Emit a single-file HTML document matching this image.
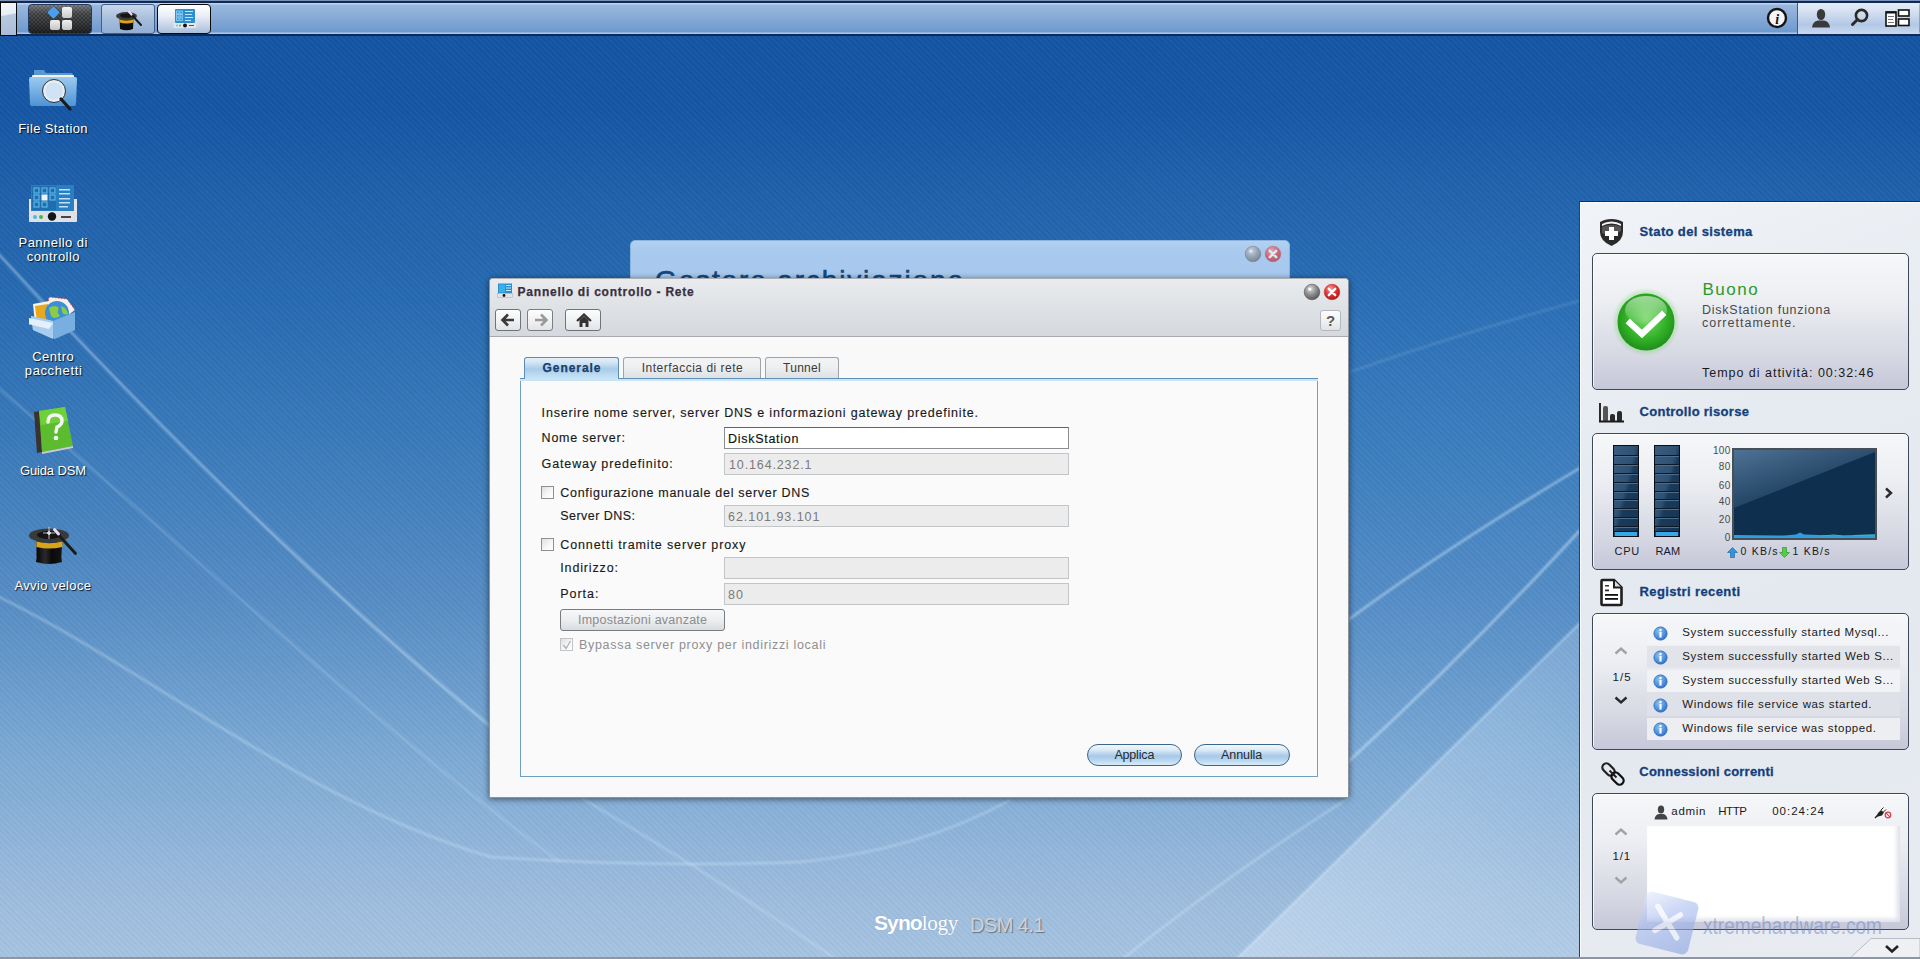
<!DOCTYPE html>
<html><head><meta charset="utf-8">
<style>
*{box-sizing:border-box;margin:0;padding:0}
html,body{width:1920px;height:959px;overflow:hidden}
body{position:relative;font-family:"Liberation Sans",sans-serif;font-size:13px;color:#222;
background:linear-gradient(180deg,#1454a3 0px,#1556a5 110px,#1f61ab 200px,#276bb2 300px,#3b7bbb 450px,#568dc5 600px,#7ba9d4 750px,#9ebdde 900px,#a6c4e2 959px);}
.abs{position:absolute}
.t{position:absolute;white-space:nowrap}
#glow{position:absolute;left:0;top:0;width:1920px;height:959px;background:radial-gradient(ellipse 650px 450px at 1450px 430px,rgba(70,150,225,0.13),rgba(70,150,225,0) 100%)}
#stripes{position:absolute;left:0;top:0;width:1920px;height:959px;
background:repeating-linear-gradient(45deg,rgba(255,255,255,0.022) 0 2px,rgba(0,0,0,0.022) 2px 4px);}
.dl{color:#fff;text-shadow:1px 1px 1px rgba(0,0,0,0.8)}
</style></head>
<body>

<div id="glow"></div><div id="stripes"></div>
<svg class="abs" style="left:0;top:0" width="1920" height="959">
<defs><filter id="bl1"><feGaussianBlur stdDeviation="1.3"/></filter><filter id="bl6"><feGaussianBlur stdDeviation="3"/></filter>
<linearGradient id="bandg" x1="0" y1="0" x2="1" y2="0.3"><stop offset="0" stop-color="#eaf4ff" stop-opacity="0.42"/><stop offset="1" stop-color="#eaf4ff" stop-opacity="0.18"/></linearGradient></defs>
<path d="M1230 965 L1585 618 L1585 965 Z" fill="url(#bandg)"/>
<g fill="none" stroke="#dcefff" filter="url(#bl1)">
 <path d="M-5 250 Q 250 530 495 730" stroke-width="2.2" stroke-opacity="0.5"/>
 <path d="M-5 385 C 200 560, 380 730, 560 862" stroke-width="1.6" stroke-opacity="0.3"/>
 <path d="M-5 595 C 150 670, 300 800, 491 857 Q 650 868 800 862 Q 920 850 1010 800" stroke-width="2" stroke-opacity="0.42"/>
 <path d="M580 797 Q 720 880 845 965" stroke-width="1.8" stroke-opacity="0.38"/>
 <path d="M1115 965 Q 1220 880 1350 797" stroke-width="2" stroke-opacity="0.4"/>
 <path d="M1348 620 Q 1450 545 1590 462" stroke-width="2.4" stroke-opacity="0.5"/>
 <path d="M1350 372 Q 1470 330 1590 298" stroke-width="1.5" stroke-opacity="0.2"/>
 <path d="M1348 762 Q 1470 650 1585 525" stroke-width="2.6" stroke-opacity="0.5"/>
 <path d="M1230 965 L1585 618" stroke-width="2" stroke-opacity="0.45"/>
</g>
</svg>
<div id="taskbar" class="abs" style="left:0;top:0;width:1920px;height:36px;background:#0f2b55;">
 <div class="abs" style="left:0;top:0;width:1920px;height:1px;background:#7a92b8"></div>
 <div class="abs" style="left:0;top:3px;width:1920px;height:31px;background:linear-gradient(180deg,#b9d4f2 0,#b9d4f2 1px,#9ab8dd 2px,#86a9d6 15px,#6e9ad0 29px,#a8c8ec 30px,#a8c8ec 31px)"></div>
 <div class="abs" style="left:0;top:2px;width:17px;height:34px;border:1px solid #0a0a0a;background:linear-gradient(170deg,#f4f6fa 0,#e8eef6 35%,#b8c9de 40%,#a9bcd6 100%)"></div>
 <div class="abs" style="left:28px;top:4px;width:64px;height:30px;border:1px solid #243a5a;border-radius:4px;background:repeating-conic-gradient(rgba(255,255,255,0.06) 0 25%,rgba(0,0,0,0.12) 0 50%) 0 0/4px 4px,linear-gradient(180deg,#77797d 0,#45474a 30%,#1a1b1d 100%)">
  <div class="abs" style="left:20px;top:3px;width:9px;height:9px;background:#4a9ff0;transform:rotate(45deg);border-radius:1px;box-shadow:0 0 1px #123"></div>
  <div class="abs" style="left:33px;top:2px;width:10px;height:11px;background:linear-gradient(#f4f4f4,#c9c9c9);border-radius:2px"></div>
  <div class="abs" style="left:21px;top:15px;width:10px;height:10px;background:linear-gradient(#f0f0f0,#c4c4c4);border-radius:2px"></div>
  <div class="abs" style="left:33px;top:15px;width:10px;height:10px;background:linear-gradient(#f0f0f0,#c4c4c4);border-radius:2px"></div>
 </div>
 <div class="abs" style="left:101px;top:4px;width:54px;height:30px;border:1px solid #3f5f8a;border-radius:3px;background:linear-gradient(180deg,#c9d7ea 0,#a7bedc 50%,#93afd6 100%)">
  <svg class="abs" style="left:13px;top:3px" width="30" height="24" viewBox="0 0 30 24">
   <ellipse cx="11.5" cy="8" rx="10.5" ry="4" fill="#3a3a3a"/>
   <ellipse cx="11.5" cy="7.6" rx="6.5" ry="2.2" fill="#151515"/>
   <path d="M4.5 11 Q11.5 13 18.5 11 L18 21 Q11.5 23.5 5 21 Z" fill="#0c0c0c"/>
   <path d="M4.5 11.5 Q11.5 13.5 18.5 11.5 L18.5 14.5 Q11.5 16.5 4.5 14.5 Z" fill="#d9a41a"/>
   <line x1="15" y1="5" x2="26" y2="17" stroke="#1a1a1a" stroke-width="2" stroke-linecap="round"/>
   <line x1="14" y1="3.5" x2="16.5" y2="6.5" stroke="#e8dcf6" stroke-width="2.2" stroke-linecap="round"/>
  </svg>
 </div>
 <div class="abs" style="left:157px;top:4px;width:54px;height:30px;border:1.5px solid #0b0b0b;border-radius:4px;background:linear-gradient(180deg,#ffffff 0,#e9eef6 40%,#a9bfdd 100%)">
  <svg class="abs" style="left:15px;top:3px" width="24" height="22" viewBox="0 0 24 22">
   <rect x="2" y="1" width="20" height="14" rx="1" fill="#2f8ed0"/>
   <g fill="none" stroke="#8fd3f7" stroke-width="0.8"><rect x="3.5" y="3" width="2.5" height="2.5"/><rect x="7" y="3" width="2.5" height="2.5"/><rect x="3.5" y="6.5" width="2.5" height="2.5"/><rect x="7" y="6.5" width="2.5" height="2.5"/><rect x="3.5" y="10" width="2.5" height="2.5"/><rect x="7" y="10" width="2.5" height="2.5"/></g>
   <rect x="12" y="3" width="8" height="1" fill="#bfe6fa"/><rect x="12" y="6" width="7" height="1" fill="#bfe6fa"/><rect x="12" y="9" width="8" height="1" fill="#bfe6fa"/><rect x="12" y="12" width="6" height="1" fill="#bfe6fa"/>
   <rect x="0.5" y="15" width="23" height="5" rx="1" fill="#e6e6e6"/>
   <circle cx="12" cy="17.5" r="2" fill="#111"/><circle cx="4" cy="17.5" r="1" fill="#5bc0e8"/><circle cx="7" cy="17.5" r="1" fill="#4cb84c"/><rect x="16" y="17" width="5" height="1" fill="#555"/>
  </svg>
 </div>
 <div class="abs" style="left:1797px;top:3px;width:122px;height:31px;border-left:1px solid #3b5d8c;background:linear-gradient(180deg,#e6edf7 0,#d3dff0 30%,#b3c8e6 70%,#c9d9ef 100%)"></div>
 <svg class="abs" style="left:1766px;top:7px" width="22" height="22" viewBox="0 0 22 22">
  <circle cx="11" cy="11" r="9" fill="#f4f6f8" stroke="#151515" stroke-width="2.4"/>
  <text x="11.3" y="16.5" text-anchor="middle" font-family="Liberation Serif" font-weight="bold" font-style="italic" font-size="14" fill="#111">i</text>
 </svg>
 <svg class="abs" style="left:1811px;top:8px" width="20" height="20" viewBox="0 0 20 20">
  <ellipse cx="10" cy="6.5" rx="4.2" ry="5.5" fill="#3a3a3a"/>
  <path d="M1 19.5 Q2 13 7 12.5 L13 12.5 Q18 13 19 19.5 Z" fill="#3a3a3a"/>
 </svg>
 <svg class="abs" style="left:1850px;top:8px" width="20" height="20" viewBox="0 0 20 20">
  <circle cx="11.5" cy="7.5" r="5.6" fill="none" stroke="#2a2a2a" stroke-width="2.6"/>
  <line x1="7.5" y1="11.5" x2="2.5" y2="16.5" stroke="#2a2a2a" stroke-width="3" stroke-linecap="round"/>
 </svg>
 <svg class="abs" style="left:1885px;top:9px" width="26" height="19" viewBox="0 0 26 19">
  <rect x="1" y="3" width="10" height="14" fill="#fff" stroke="#111" stroke-width="1.6"/>
  <rect x="1" y="2.5" width="10" height="2" fill="#111"/>
  <rect x="13.5" y="1" width="10.5" height="6" fill="#fff" stroke="#111" stroke-width="1.6"/>
  <rect x="13.5" y="10" width="10.5" height="6.5" fill="#fff" stroke="#111" stroke-width="1.6"/>
  <rect x="3" y="7" width="6" height="0.8" fill="#555"/><rect x="3" y="10" width="5" height="0.8" fill="#555"/><rect x="3" y="13" width="6" height="0.8" fill="#555"/>
 </svg>
</div>




<svg class="abs" style="left:28px;top:66px" width="52" height="48" viewBox="0 0 52 48">
 <defs><linearGradient id="fold" x1="0" y1="0" x2="0" y2="1"><stop offset="0" stop-color="#9ccaf0"/><stop offset="1" stop-color="#4f93d4"/></linearGradient></defs>
 <path d="M6 4 L16 4 L18 7 L43 7 Q45 7 45 9 L45 12 L6 12 Z" fill="#5d97cf"/>
 <rect x="4" y="9" width="42" height="6" rx="1" fill="#f2f2e8"/>
 <path d="M1 13 Q1 11 3 11 L47 11 Q49 11 49 13 L48 38 Q48 40 46 40 L4 40 Q2 40 2 38 Z" fill="url(#fold)"/>
 <circle cx="26" cy="25" r="10" fill="#cfe3f4" stroke="#e8eef4" stroke-width="2.5"/>
 <circle cx="26" cy="25" r="11.5" fill="none" stroke="#333" stroke-width="1"/>
 <line x1="33" y1="33" x2="42" y2="43" stroke="#1b1b1b" stroke-width="3.2" stroke-linecap="round"/>
</svg>

<svg class="abs" style="left:28px;top:184px" width="50" height="40" viewBox="0 0 50 40">
 <rect x="3" y="1" width="43" height="26" fill="#2a7fc2"/>
 <rect x="4" y="2" width="24" height="24" fill="#1f6fb0"/>
 <g fill="none" stroke="#5cb5e6" stroke-width="1.2">
  <rect x="6" y="4" width="5" height="5"/><rect x="14" y="4" width="5" height="5"/><rect x="22" y="4" width="5" height="5"/>
  <rect x="6" y="11" width="5" height="5"/><rect x="22" y="11" width="5" height="5"/>
  <rect x="6" y="18" width="5" height="5"/><rect x="14" y="18" width="5" height="5"/>
 </g>
 <rect x="13.5" y="10.5" width="6" height="6" fill="#e9f4ff"/>
 <g fill="#bfe2f8"><rect x="31" y="5" width="11" height="1.5"/><rect x="31" y="9" width="11" height="1.5"/><rect x="31" y="14" width="11" height="1.5"/><rect x="31" y="18" width="11" height="1.5"/><rect x="31" y="22" width="9" height="1.5"/></g>
 <path d="M1 15 L3 15 L3 27 L46 27 L46 15 L49 15 L49 37 Q49 38 47 38 L3 38 Q1 38 1 37 Z" fill="#e2e4e8"/>
 <rect x="1" y="27" width="48" height="11" rx="1.5" fill="#dfe1e6"/>
 <circle cx="7" cy="33" r="2" fill="#4fb6e8"/><circle cx="13" cy="33" r="2" fill="#49b548"/>
 <circle cx="24" cy="32.5" r="4.2" fill="#151515"/>
 <rect x="33" y="32" width="10" height="2" fill="#444"/>
</svg>

<svg class="abs" style="left:29px;top:294px" width="48" height="46" viewBox="0 0 48 46">
 <path d="M20 3 L38 5 L46 16 L36 24 L18 14 Z" fill="#f4f0ee" stroke="#d33" stroke-width="0.8" stroke-dasharray="1.5 1.5"/>
 <path d="M4 10 L20 7 L22 28 L6 30 Z" fill="#f6f3e8"/>
 <path d="M6 12 L19 10 L21 26 L8 28 Z" fill="#e8a81e"/>
 <circle cx="28" cy="19" r="12" fill="#3a8fd6"/>
 <path d="M20 14 Q26 10 30 14 Q27 18 31 22 Q25 26 22 22 Z" fill="#8ccc44"/>
 <path d="M32 12 Q38 14 39 20 Q34 22 33 17 Z" fill="#8ccc44"/>
 <path d="M2 22 L24 27 L46 18 L46 36 L26 45 L4 36 Z" fill="#78aee0"/>
 <path d="M2 22 L24 27 L24 45 L4 36 Z" fill="#a9cdf0"/>
 <path d="M0 24 L24 29 L20 35 L-1 30 Z" fill="#e4f0fb"/>
</svg>

<svg class="abs" style="left:32px;top:407px" width="44" height="48" viewBox="0 0 44 48">
 <path d="M2 5 L8 4 L10 45 L5 46 Z" fill="#3a3230"/>
 <path d="M7 4 L33 0 L41 39 L10 45 Z" fill="#5dbb2e"/>
 <path d="M7 4 L33 0 L36 14 L9 18 Z" fill="#6fd03a"/>
 <path d="M10 45 L41 39 L41 41 L10 47 Z" fill="#ccc"/>
 <path d="M16 15 Q16 8 23 8 Q30 8 30 14 Q30 18 25 20 L24 25" fill="none" stroke="#f4f4f4" stroke-width="3.5" stroke-linecap="round"/>
 <circle cx="24" cy="31" r="2.3" fill="#f4f4f4"/>
</svg>

<svg class="abs" style="left:28px;top:524px" width="50" height="44" viewBox="0 0 50 44">
 <defs><linearGradient id="hatc" x1="0" y1="0" x2="1" y2="0"><stop offset="0" stop-color="#050505"/><stop offset="0.35" stop-color="#2a2a2a"/><stop offset="0.6" stop-color="#0a0a0a"/><stop offset="1" stop-color="#151515"/></linearGradient></defs>
 <ellipse cx="21" cy="11.5" rx="20" ry="7" fill="#3a3a3a"/>
 <ellipse cx="21" cy="11" rx="12" ry="4" fill="#141414"/>
 <path d="M8.5 17 Q21 20 34.3 17 L33.5 30 Q33 34 34 38 Q21 42 8 38 Q9 34 8.5 30 Z" fill="url(#hatc)"/>
 <path d="M8.5 17.5 Q21 21 34.3 17.5 L34.3 23 Q21 26 8.5 23 Z" fill="#d9a41a"/>
 <line x1="28" y1="8" x2="47.5" y2="29.5" stroke="#1a1a1a" stroke-width="2.8" stroke-linecap="round"/>
 <line x1="26.5" y1="5.5" x2="30.5" y2="10" stroke="#e8dcf6" stroke-width="3" stroke-linecap="round"/>
 <path d="M19 9 L21 7 L23 9 L21 11 Z M21 3 L21 15 M15 9 L27 9" stroke="#fff" stroke-width="0.8" fill="#fff" opacity="0.85"/>
</svg>

<div class="t" style="left:18.3px;top:122.2px;font-size:13px;line-height:13px;font-weight:normal;color:#fff;letter-spacing:0.38px;text-shadow:1px 1px 1px rgba(0,0,0,0.85);">File Station</div>
<div class="t" style="left:18.5px;top:235.8px;font-size:13px;line-height:13px;font-weight:normal;color:#fff;letter-spacing:0.46px;text-shadow:1px 1px 1px rgba(0,0,0,0.85);">Pannello di</div>
<div class="t" style="left:26.7px;top:249.9px;font-size:13px;line-height:13px;font-weight:normal;color:#fff;letter-spacing:0.46px;text-shadow:1px 1px 1px rgba(0,0,0,0.85);">controllo</div>
<div class="t" style="left:32.2px;top:350.0px;font-size:13px;line-height:13px;font-weight:normal;color:#fff;letter-spacing:0.51px;text-shadow:1px 1px 1px rgba(0,0,0,0.85);">Centro</div>
<div class="t" style="left:24.8px;top:363.9px;font-size:13px;line-height:13px;font-weight:normal;color:#fff;letter-spacing:0.62px;text-shadow:1px 1px 1px rgba(0,0,0,0.85);">pacchetti</div>
<div class="t" style="left:20.0px;top:463.7px;font-size:13px;line-height:13px;font-weight:normal;color:#fff;letter-spacing:-0.15px;text-shadow:1px 1px 1px rgba(0,0,0,0.85);">Guida DSM</div>
<div class="t" style="left:14.5px;top:578.5px;font-size:13px;line-height:13px;font-weight:normal;color:#fff;letter-spacing:0.34px;text-shadow:1px 1px 1px rgba(0,0,0,0.85);">Avvio veloce</div>
<div class="t" style="left:874.0px;top:911.8px;font-size:21px;line-height:21px;font-weight:bold;color:#fff;letter-spacing:-0.9px;text-shadow:0 0 1px rgba(80,110,150,0.4);">Syno<span style="font-weight:normal;font-family:Liberation Serif;letter-spacing:-0.3px">logy</span></div>
<div class="t" style="left:970.0px;top:915.4px;font-size:20px;line-height:20px;font-weight:normal;color:#cfd3d8;letter-spacing:-0.55px;text-shadow:1px 1px 1px rgba(60,60,60,0.6);">DSM 4.1</div>
<div class="abs" style="left:630px;top:240px;width:660px;height:70px;border-radius:5px 5px 0 0;background:linear-gradient(180deg,#b3d1f1 0,#a9caee 10px,#a6c8ed 100%);border:1px solid #8db2de;overflow:hidden">
</div>
<div class="t" style="left:655.0px;top:266.7px;font-size:28px;line-height:28px;font-weight:normal;color:#12487f;letter-spacing:1.86px;-webkit-text-stroke:0.6px #12487f;">Gestore archiviazione</div>
<svg class="abs" style="left:1244px;top:245px;opacity:0.6;" width="40" height="18" viewBox="0 0 40 18">
 <defs>
  <radialGradient id="gg1253" cx="0.4" cy="0.3" r="0.8"><stop offset="0" stop-color="#d8d8d8"/><stop offset="0.5" stop-color="#8a8a8a"/><stop offset="1" stop-color="#4a4a4a"/></radialGradient>
  <radialGradient id="rg1253" cx="0.4" cy="0.3" r="0.8"><stop offset="0" stop-color="#ff9a9a"/><stop offset="0.5" stop-color="#e03030"/><stop offset="1" stop-color="#a01010"/></radialGradient>
 </defs>
 <circle cx="9" cy="9" r="7.8" fill="url(#gg1253)" stroke="#555" stroke-width="0.6"/>
 <circle cx="6.8" cy="6.2" r="1.6" fill="#fff" fill-opacity="0.9"/>
 <circle cx="29" cy="9" r="7.8" fill="url(#rg1253)" stroke="#c03030" stroke-width="0.6"/>
 <path d="M25.8 5.8 L32.2 12.2 M32.2 5.8 L25.8 12.2" stroke="#fff" stroke-width="2.4" stroke-linecap="round"/>
</svg>
<div class="abs" style="left:489px;top:278px;width:860px;height:520px;border-radius:4px 4px 0 0;background:#f9f9f9;box-shadow:0 1px 6px rgba(0,0,0,0.55);border:1px solid #8e949a;border-top-color:#aab0b6;overflow:hidden">
 <div class="abs" style="left:0;top:0;width:858px;height:58px;background:linear-gradient(180deg,#e9ebee 0,#e2e5e8 20px,#d5d8dc 57px);border-bottom:1px solid #a6aaaf"></div>
</div>
<svg class="abs" style="left:497px;top:283px" width="16" height="15" viewBox="0 0 16 15">
 <rect x="1" y="0.5" width="14" height="10" fill="#2a8fd0"/><rect x="2" y="1.5" width="6" height="8" fill="#39b0e8"/>
 <rect x="9" y="2" width="5" height="1" fill="#bfe6fa"/><rect x="9" y="4.5" width="5" height="1" fill="#bfe6fa"/><rect x="9" y="7" width="5" height="1" fill="#bfe6fa"/>
 <rect x="0.5" y="10.5" width="15" height="4" fill="#e4e4e4" stroke="#aaa" stroke-width="0.5"/><circle cx="7" cy="12.5" r="1.4" fill="#111"/>
</svg>
<div class="t" style="left:517.6px;top:285.7px;font-size:12px;line-height:12px;font-weight:bold;color:#3a3040;letter-spacing:0.77px;-webkit-text-stroke:0.25px #3a3040;">Pannello di controllo - Rete</div>
<svg class="abs" style="left:1303px;top:283px;" width="40" height="18" viewBox="0 0 40 18">
 <defs>
  <radialGradient id="gg1312" cx="0.4" cy="0.3" r="0.8"><stop offset="0" stop-color="#d8d8d8"/><stop offset="0.5" stop-color="#8a8a8a"/><stop offset="1" stop-color="#4a4a4a"/></radialGradient>
  <radialGradient id="rg1312" cx="0.4" cy="0.3" r="0.8"><stop offset="0" stop-color="#ff9a9a"/><stop offset="0.5" stop-color="#e03030"/><stop offset="1" stop-color="#a01010"/></radialGradient>
 </defs>
 <circle cx="9" cy="9" r="7.8" fill="url(#gg1312)" stroke="#555" stroke-width="0.6"/>
 <circle cx="6.8" cy="6.2" r="1.6" fill="#fff" fill-opacity="0.9"/>
 <circle cx="29" cy="9" r="7.8" fill="url(#rg1312)" stroke="#c03030" stroke-width="0.6"/>
 <path d="M25.8 5.8 L32.2 12.2 M32.2 5.8 L25.8 12.2" stroke="#fff" stroke-width="2.4" stroke-linecap="round"/>
</svg>
<div class="abs" style="left:495px;top:309px;width:26px;height:22px;border:1px solid #6f7479;border-radius:3px;background:linear-gradient(180deg,#fdfdfd 0,#f1f2f3 50%,#e1e3e6 100%)"><svg class="abs" style="left:4px;top:3px" width="16" height="14" viewBox="0 0 16 14"><path d="M8 1.5 L2.5 7 L8 12.5 M3 7 L14 7" fill="none" stroke="#3a3a3a" stroke-width="2.6" stroke-linejoin="miter"/></svg></div>
<div class="abs" style="left:527px;top:309px;width:26px;height:22px;border:1px solid #7a7e83;border-radius:3px;background:linear-gradient(180deg,#fdfdfd 0,#f1f2f3 50%,#e1e3e6 100%)"><svg class="abs" style="left:5px;top:3px" width="16" height="14" viewBox="0 0 16 14"><path d="M8 1.5 L13.5 7 L8 12.5 M13 7 L2 7" fill="none" stroke="#9a9a9a" stroke-width="2.6"/></svg></div>
<div class="abs" style="left:565px;top:309px;width:36px;height:22px;border:1px solid #6f7479;border-radius:3px;background:linear-gradient(180deg,#fdfdfd 0,#f1f2f3 50%,#e1e3e6 100%)"><svg class="abs" style="left:10px;top:3px" width="16" height="15" viewBox="0 0 16 15"><path d="M1 8 L8 1.5 L15 8" fill="none" stroke="#333" stroke-width="2.2"/><path d="M3.5 7 L8 3 L12.5 7 L12.5 14 L9.5 14 L9.5 10 L6.5 10 L6.5 14 L3.5 14 Z" fill="#333"/></svg></div>
<div class="abs" style="left:1320px;top:310px;width:21px;height:21px;border:1px solid #b4b8bc;border-radius:3px;background:linear-gradient(180deg,#fdfdfd 0,#f1f2f3 50%,#e1e3e6 100%)"><div class="t" style="left:5px;top:1px;font-size:15px;line-height:18px;font-weight:bold;color:#5a5a5a">?</div></div>
<div class="abs" style="left:524px;top:357px;width:95px;height:23px;border:1px solid #5b8cb4;border-bottom:none;border-radius:3px 3px 0 0;background:linear-gradient(180deg,#e6f1fa 0,#cfe3f4 5px,#a9cbe8 11px,#bcdcf2 17px,#cde8f8 22px)"></div>
<div class="abs" style="left:623px;top:357px;width:138px;height:22px;border:1px solid #9ea4aa;border-bottom:none;border-radius:3px 3px 0 0;background:linear-gradient(180deg,#f1f3f5 0,#eef0f2 40%,#dde0e4 100%)"></div>
<div class="abs" style="left:765px;top:357px;width:74px;height:22px;border:1px solid #9ea4aa;border-bottom:none;border-radius:3px 3px 0 0;background:linear-gradient(180deg,#f1f3f5 0,#eef0f2 40%,#dde0e4 100%)"></div>
<div class="abs" style="left:520px;top:378px;width:798px;height:4px;background:#c9e4f5;border-top:1px solid #5f90b8;border-bottom:1px solid #5f90b8"></div>
<div class="abs" style="left:525px;top:378px;width:93px;height:2px;background:#c9e4f5"></div>
<div class="abs" style="left:520px;top:381px;width:798px;height:396px;border:1px solid #6fa0c2;border-top:none;background:#fafafa"></div>
<div class="t" style="left:542.5px;top:362.0px;font-size:12px;line-height:12px;font-weight:bold;color:#1b3d6b;letter-spacing:0.95px;-webkit-text-stroke:0.25px #1b3d6b;">Generale</div>
<div class="t" style="left:641.7px;top:362.0px;font-size:12px;line-height:12px;font-weight:normal;color:#3a3a3a;letter-spacing:0.50px;">Interfaccia di rete</div>
<div class="t" style="left:783.1px;top:362.0px;font-size:12px;line-height:12px;font-weight:normal;color:#3a3a3a;letter-spacing:0.25px;">Tunnel</div>
<div class="t" style="left:541.6px;top:406.8px;font-size:12.5px;line-height:12.5px;font-weight:normal;color:#1a1a1a;letter-spacing:0.81px;-webkit-text-stroke:0.15px #1a1a1a;">Inserire nome server, server DNS e informazioni gateway predefinite.</div>
<div class="t" style="left:541.6px;top:431.8px;font-size:12.5px;line-height:12.5px;font-weight:normal;color:#1a1a1a;letter-spacing:0.76px;-webkit-text-stroke:0.15px #1a1a1a;">Nome server:</div>
<div class="t" style="left:541.6px;top:457.6px;font-size:12.5px;line-height:12.5px;font-weight:normal;color:#1a1a1a;letter-spacing:0.87px;-webkit-text-stroke:0.15px #1a1a1a;">Gateway predefinito:</div>
<div class="t" style="left:560.3px;top:487.1px;font-size:12.5px;line-height:12.5px;font-weight:normal;color:#1a1a1a;letter-spacing:0.70px;-webkit-text-stroke:0.15px #1a1a1a;">Configurazione manuale del server DNS</div>
<div class="t" style="left:560.3px;top:509.9px;font-size:12.5px;line-height:12.5px;font-weight:normal;color:#1a1a1a;letter-spacing:0.45px;-webkit-text-stroke:0.15px #1a1a1a;">Server DNS:</div>
<div class="t" style="left:560.3px;top:539.0px;font-size:12.5px;line-height:12.5px;font-weight:normal;color:#1a1a1a;letter-spacing:0.88px;-webkit-text-stroke:0.15px #1a1a1a;">Connetti tramite server proxy</div>
<div class="t" style="left:560.3px;top:562.1px;font-size:12.5px;line-height:12.5px;font-weight:normal;color:#1a1a1a;letter-spacing:0.85px;-webkit-text-stroke:0.15px #1a1a1a;">Indirizzo:</div>
<div class="t" style="left:560.3px;top:588.0px;font-size:12.5px;line-height:12.5px;font-weight:normal;color:#1a1a1a;letter-spacing:0.95px;-webkit-text-stroke:0.15px #1a1a1a;">Porta:</div>
<div class="abs" style="left:724px;top:427px;width:345px;height:22px;background:#fff;border:1px solid #8a8e93;border-top-color:#5f6368"></div>
<div class="abs" style="left:724px;top:453px;width:345px;height:22px;background:#ececec;border:1px solid #c3c6c9"></div>
<div class="abs" style="left:724px;top:505px;width:345px;height:22px;background:#ececec;border:1px solid #c3c6c9"></div>
<div class="abs" style="left:724px;top:557px;width:345px;height:22px;background:#ececec;border:1px solid #c3c6c9"></div>
<div class="abs" style="left:724px;top:583px;width:345px;height:22px;background:#ececec;border:1px solid #c3c6c9"></div>
<div class="t" style="left:728.0px;top:432.6px;font-size:12.5px;line-height:12.5px;font-weight:normal;color:#111;letter-spacing:0.72px;-webkit-text-stroke:0.15px #111;">DiskStation</div>
<div class="t" style="left:729.0px;top:459.0px;font-size:12.5px;line-height:12.5px;font-weight:normal;color:#7a7a7a;letter-spacing:0.87px;">10.164.232.1</div>
<div class="t" style="left:728.0px;top:510.9px;font-size:12.5px;line-height:12.5px;font-weight:normal;color:#7a7a7a;letter-spacing:0.96px;">62.101.93.101</div>
<div class="t" style="left:728.0px;top:589.0px;font-size:12.5px;line-height:12.5px;font-weight:normal;color:#7a7a7a;letter-spacing:1.09px;">80</div>
<div class="abs" style="left:541px;top:486px;width:13px;height:13px;border:1px solid #8d9196;background:linear-gradient(135deg,#dcdfe2 0,#f8f8f8 60%,#fff 100%)"></div>
<div class="abs" style="left:541px;top:538px;width:13px;height:13px;border:1px solid #8d9196;background:linear-gradient(135deg,#dcdfe2 0,#f8f8f8 60%,#fff 100%)"></div>
<div class="abs" style="left:560px;top:638px;width:13px;height:13px;border:1px solid #c2c5c8;background:linear-gradient(135deg,#dcdfe2 0,#f8f8f8 60%,#fff 100%)"></div>
<svg class="abs" style="left:561px;top:639px" width="12" height="12" viewBox="0 0 12 12"><path d="M2.5 6 L5 9.5 L9.5 2" fill="none" stroke="#b0b0b0" stroke-width="1.3"/></svg>
<div class="abs" style="left:560px;top:609px;width:165px;height:22px;border:1px solid #777c81;border-radius:3px;background:linear-gradient(180deg,#f7f8f9 0,#eceef0 50%,#d9dcdf 100%)"></div>
<div class="t" style="left:578.0px;top:614.0px;font-size:12.5px;line-height:12.5px;font-weight:normal;color:#8c8c8c;letter-spacing:0.23px;">Impostazioni avanzate</div>
<div class="t" style="left:579.0px;top:638.6px;font-size:12.5px;line-height:12.5px;font-weight:normal;color:#8f8f8f;letter-spacing:0.69px;">Bypassa server proxy per indirizzi locali</div>
<div class="abs" style="left:1087px;top:744px;width:95px;height:22px;border:1px solid #3d6688;border-radius:11px;background:linear-gradient(180deg,#f2f8fd 0,#dcebf7 25%,#a7c8e7 55%,#bcd9f1 80%,#d9edfb 100%)"></div>
<div class="abs" style="left:1194px;top:744px;width:96px;height:22px;border:1px solid #3d6688;border-radius:11px;background:linear-gradient(180deg,#f2f8fd 0,#dcebf7 25%,#a7c8e7 55%,#bcd9f1 80%,#d9edfb 100%)"></div>
<div class="t" style="left:1114.4px;top:748.5px;font-size:12.5px;line-height:12.5px;font-weight:normal;color:#222a33;letter-spacing:-0.17px;">Applica</div>
<div class="t" style="left:1221.0px;top:748.5px;font-size:12.5px;line-height:12.5px;font-weight:normal;color:#222a33;letter-spacing:-0.07px;">Annulla</div>
<div class="abs" style="left:1579px;top:201px;width:341px;height:758px;background:linear-gradient(160deg,#f0f3f7 0,#e6ebf1 30%,#e4e9ef 60%,#e8ecf2 100%);border-left:1px solid #1f4272;border-top:1px solid #0f2e58;box-shadow:inset 1px 1px 0 #fafcff"></div>
<svg class="abs" style="left:1598px;top:218px" width="27" height="29" viewBox="0 0 27 29">
 <path d="M13.5 1 Q20 1 25 4 L25 14 Q25 23 13.5 28 Q2 23 2 14 L2 4 Q7 1 13.5 1 Z" fill="#2a2a2a"/>
 <path d="M13.5 3.5 Q19 3.5 23 6 L23 8 Q19 5.5 13.5 5.5 Q8 5.5 4 8 L4 6 Q8 3.5 13.5 3.5Z" fill="#f4f4f4"/>
 <path d="M4 9 Q8 7 13.5 7 Q19 7 23 9 L23 13 Q13 20 4 15 Z" fill="#6a6a6a" fill-opacity="0.7"/>
 <rect x="11" y="9" width="5" height="13" fill="#fff"/><rect x="7" y="13" width="13" height="5" fill="#fff"/>
</svg>
<div class="t" style="left:1639.6px;top:225.2px;font-size:13px;line-height:13px;font-weight:bold;color:#143f7c;letter-spacing:0.36px;-webkit-text-stroke:0.3px #143f7c;">Stato del sistema</div>
<div class="abs" style="left:1592px;top:253px;width:317px;height:137px;border:1px solid #3e4859;border-radius:5px;background:linear-gradient(180deg,#f6f7f9 0,#eceef2 35%,#d6d8e3 75%,#c6c8d9 100%);box-shadow:inset 1px 1px 0 rgba(255,255,255,0.8)"></div>
<svg class="abs" style="left:1612px;top:288px" width="68" height="68" viewBox="0 0 68 68">
 <defs>
  <radialGradient id="gc" cx="0.5" cy="0.45" r="0.55"><stop offset="0" stop-color="#7ad86a"/><stop offset="0.6" stop-color="#35b52a"/><stop offset="1" stop-color="#1f8f1a"/></radialGradient>
  <radialGradient id="gglow" cx="0.5" cy="0.5" r="0.5"><stop offset="0.75" stop-color="#6fd45f" stop-opacity="0.55"/><stop offset="1" stop-color="#6fd45f" stop-opacity="0"/></radialGradient>
  <linearGradient id="gshine" x1="0" y1="0" x2="0" y2="1"><stop offset="0" stop-color="#fff" stop-opacity="0.55"/><stop offset="1" stop-color="#fff" stop-opacity="0.05"/></linearGradient>
 </defs>
 <circle cx="34" cy="34" r="34" fill="url(#gglow)"/>
 <circle cx="34" cy="34" r="28.5" fill="url(#gc)"/>
 <ellipse cx="34" cy="22" rx="21" ry="14" fill="url(#gshine)"/>
 <path d="M18 35 L30 46 L50 27" fill="none" stroke="#fff" stroke-width="6.2" stroke-linecap="square"/>
</svg>
<div class="t" style="left:1702.4px;top:280.7px;font-size:17px;line-height:17px;font-weight:normal;color:#2c9a2c;letter-spacing:1.51px;">Buono</div>
<div class="t" style="left:1702.0px;top:303.6px;font-size:12.5px;line-height:12.5px;font-weight:normal;color:#4a4a4a;letter-spacing:0.75px;">DiskStation funziona</div>
<div class="t" style="left:1702.0px;top:317.0px;font-size:12.5px;line-height:12.5px;font-weight:normal;color:#4a4a4a;letter-spacing:1.00px;">correttamente.</div>
<div class="t" style="left:1702.0px;top:366.6px;font-size:12.5px;line-height:12.5px;font-weight:normal;color:#1a1a1a;letter-spacing:0.98px;">Tempo di attività: 00:32:46</div>
<svg class="abs" style="left:1598px;top:402px" width="27" height="21" viewBox="0 0 27 21">
 <rect x="1" y="1" width="2" height="19" fill="#2a2a2a"/>
 <rect x="5" y="4" width="5" height="16" rx="2" fill="#555"/>
 <rect x="12" y="12" width="5" height="8" rx="2" fill="#2a2a2a"/>
 <rect x="19" y="9" width="5" height="11" rx="2" fill="#2a2a2a"/>
 <rect x="1" y="18.5" width="25" height="2" fill="#1a1a1a"/>
</svg>
<div class="t" style="left:1639.5px;top:405.2px;font-size:13px;line-height:13px;font-weight:bold;color:#143f7c;letter-spacing:0.29px;-webkit-text-stroke:0.3px #143f7c;">Controllo risorse</div>
<div class="abs" style="left:1592px;top:433px;width:317px;height:137px;border:1px solid #3e4859;border-radius:5px;background:linear-gradient(180deg,#f6f7f9 0,#eceef2 35%,#d6d8e3 75%,#c6c8d9 100%);box-shadow:inset 1px 1px 0 rgba(255,255,255,0.8)"></div>
<div class="abs" style="left:1613px;top:445px;width:26px;height:92px;border:1px solid #0a0f16;background:linear-gradient(105deg,#3a5c7d 0,#2f5274 45%,#1b3a5a 55%,#163452 100%);overflow:hidden"><div class="abs" style="left:1px;top:9.9px;width:23px;height:1px;background:#4c6d8c"></div><div class="abs" style="left:0;top:8.9px;width:25px;height:1px;background:#0b1a2a"></div><div class="abs" style="left:1px;top:18.8px;width:23px;height:1px;background:#4c6d8c"></div><div class="abs" style="left:0;top:17.8px;width:25px;height:1px;background:#0b1a2a"></div><div class="abs" style="left:1px;top:27.7px;width:23px;height:1px;background:#4c6d8c"></div><div class="abs" style="left:0;top:26.7px;width:25px;height:1px;background:#0b1a2a"></div><div class="abs" style="left:1px;top:36.6px;width:23px;height:1px;background:#4c6d8c"></div><div class="abs" style="left:0;top:35.6px;width:25px;height:1px;background:#0b1a2a"></div><div class="abs" style="left:1px;top:45.5px;width:23px;height:1px;background:#4c6d8c"></div><div class="abs" style="left:0;top:44.5px;width:25px;height:1px;background:#0b1a2a"></div><div class="abs" style="left:1px;top:54.4px;width:23px;height:1px;background:#4c6d8c"></div><div class="abs" style="left:0;top:53.4px;width:25px;height:1px;background:#0b1a2a"></div><div class="abs" style="left:1px;top:63.3px;width:23px;height:1px;background:#4c6d8c"></div><div class="abs" style="left:0;top:62.3px;width:25px;height:1px;background:#0b1a2a"></div><div class="abs" style="left:1px;top:72.2px;width:23px;height:1px;background:#4c6d8c"></div><div class="abs" style="left:0;top:71.2px;width:25px;height:1px;background:#0b1a2a"></div><div class="abs" style="left:1px;top:81.1px;width:23px;height:1px;background:#4c6d8c"></div><div class="abs" style="left:0;top:80.1px;width:25px;height:1px;background:#0b1a2a"></div>
 <div class="abs" style="left:1px;top:86px;width:22px;height:4px;background:#3aa6ea"></div>
 <div class="abs" style="left:0;top:84.5px;width:25px;height:1px;background:#0b1a2a"></div></div>
<div class="abs" style="left:1654px;top:445px;width:26px;height:92px;border:1px solid #0a0f16;background:linear-gradient(105deg,#3a5c7d 0,#2f5274 45%,#1b3a5a 55%,#163452 100%);overflow:hidden"><div class="abs" style="left:1px;top:9.9px;width:23px;height:1px;background:#4c6d8c"></div><div class="abs" style="left:0;top:8.9px;width:25px;height:1px;background:#0b1a2a"></div><div class="abs" style="left:1px;top:18.8px;width:23px;height:1px;background:#4c6d8c"></div><div class="abs" style="left:0;top:17.8px;width:25px;height:1px;background:#0b1a2a"></div><div class="abs" style="left:1px;top:27.7px;width:23px;height:1px;background:#4c6d8c"></div><div class="abs" style="left:0;top:26.7px;width:25px;height:1px;background:#0b1a2a"></div><div class="abs" style="left:1px;top:36.6px;width:23px;height:1px;background:#4c6d8c"></div><div class="abs" style="left:0;top:35.6px;width:25px;height:1px;background:#0b1a2a"></div><div class="abs" style="left:1px;top:45.5px;width:23px;height:1px;background:#4c6d8c"></div><div class="abs" style="left:0;top:44.5px;width:25px;height:1px;background:#0b1a2a"></div><div class="abs" style="left:1px;top:54.4px;width:23px;height:1px;background:#4c6d8c"></div><div class="abs" style="left:0;top:53.4px;width:25px;height:1px;background:#0b1a2a"></div><div class="abs" style="left:1px;top:63.3px;width:23px;height:1px;background:#4c6d8c"></div><div class="abs" style="left:0;top:62.3px;width:25px;height:1px;background:#0b1a2a"></div><div class="abs" style="left:1px;top:72.2px;width:23px;height:1px;background:#4c6d8c"></div><div class="abs" style="left:0;top:71.2px;width:25px;height:1px;background:#0b1a2a"></div><div class="abs" style="left:1px;top:81.1px;width:23px;height:1px;background:#4c6d8c"></div><div class="abs" style="left:0;top:80.1px;width:25px;height:1px;background:#0b1a2a"></div>
 <div class="abs" style="left:1px;top:86px;width:22px;height:4px;background:#3aa6ea"></div>
 <div class="abs" style="left:0;top:84.5px;width:25px;height:1px;background:#0b1a2a"></div></div>
<div class="t" style="left:1614.5px;top:546.3px;font-size:11px;line-height:11px;font-weight:normal;color:#1a1a2a;letter-spacing:0.79px;">CPU</div>
<div class="t" style="left:1655.5px;top:546.3px;font-size:11px;line-height:11px;font-weight:normal;color:#1a1a2a;letter-spacing:0.08px;">RAM</div>
<div class="abs" style="left:1732px;top:448px;width:145px;height:92px;border:2px solid #4a4f55;background:#0f2f4f;overflow:hidden">
 <svg class="abs" style="left:0;top:0" width="141" height="88" viewBox="0 0 141 88">
  <defs><linearGradient id="chg" x1="0" y1="0" x2="0.7" y2="0.9"><stop offset="0" stop-color="#4f7395"/><stop offset="0.6" stop-color="#294b6c"/><stop offset="1" stop-color="#163656"/></linearGradient></defs>
  <path d="M0 0 L141 0 L141 2 L0 58 Z" fill="url(#chg)"/>
  <path d="M0 85 L50 85.5 L62 84.5 L66 82.5 L70 84.5 L100 85.5 L141 84.5 L141 88 L0 88 Z" fill="#2f9ee0"/>
  <path d="M88 86 L100 85 L108 86 M120 85.5 L141 85" fill="none" stroke="#3cc090" stroke-width="1.2"/>
 </svg>
</div>
<div class="t" style="left:1690px;width:40.5px;text-align:right;top:445.5px;font-size:10px;line-height:10px;color:#4a4a4a;letter-spacing:0.3px">100</div>
<div class="t" style="left:1690px;width:40.5px;text-align:right;top:462.3px;font-size:10px;line-height:10px;color:#4a4a4a;letter-spacing:0.3px">80</div>
<div class="t" style="left:1690px;width:40.5px;text-align:right;top:480.5px;font-size:10px;line-height:10px;color:#4a4a4a;letter-spacing:0.3px">60</div>
<div class="t" style="left:1690px;width:40.5px;text-align:right;top:497.3px;font-size:10px;line-height:10px;color:#4a4a4a;letter-spacing:0.3px">40</div>
<div class="t" style="left:1690px;width:40.5px;text-align:right;top:515.2px;font-size:10px;line-height:10px;color:#4a4a4a;letter-spacing:0.3px">20</div>
<div class="t" style="left:1690px;width:40.5px;text-align:right;top:533.0px;font-size:10px;line-height:10px;color:#4a4a4a;letter-spacing:0.3px">0</div>
<svg class="abs" style="left:1884px;top:487px" width="10" height="12" viewBox="0 0 10 12"><path d="M2 1.5 L7 6 L2 10.5" fill="none" stroke="#2a2a2a" stroke-width="2.4"/></svg>
<svg class="abs" style="left:1727px;top:547px" width="11" height="11" viewBox="0 0 11 11"><path d="M5.5 0.5 L10.5 5.5 L7.5 5.5 L7.5 10.5 L3.5 10.5 L3.5 5.5 L0.5 5.5 Z" fill="#2f95e0" stroke="#1a5fa0" stroke-width="0.6"/></svg>
<svg class="abs" style="left:1779px;top:547px" width="11" height="11" viewBox="0 0 11 11"><path d="M5.5 10.5 L10.5 5.5 L7.5 5.5 L7.5 0.5 L3.5 0.5 L3.5 5.5 L0.5 5.5 Z" fill="#4fd23f" stroke="#2a8a2a" stroke-width="0.6"/></svg>
<div class="t" style="left:1740.6px;top:545.7px;font-size:10.5px;line-height:10.5px;font-weight:normal;color:#1a1a1a;letter-spacing:1.21px;">0 KB/s</div>
<div class="t" style="left:1792.5px;top:545.7px;font-size:10.5px;line-height:10.5px;font-weight:normal;color:#1a1a1a;letter-spacing:1.21px;">1 KB/s</div>
<svg class="abs" style="left:1599px;top:578px" width="25" height="29" viewBox="0 0 25 29">
 <path d="M2.5 3 Q2.5 2 3.5 2 L15 2 L22.5 9.5 L22.5 26 Q22.5 27 21.5 27 L3.5 27 Q2.5 27 2.5 26 Z" fill="#fff" stroke="#1f1f1f" stroke-width="2.6"/>
 <path d="M15 2 L15 9.5 L22.5 9.5" fill="#ddd" stroke="#1f1f1f" stroke-width="2"/>
 <rect x="6" y="7" width="4" height="1.5" fill="#333"/><rect x="6" y="11.5" width="4" height="1.8" fill="#333"/>
 <rect x="6" y="16" width="13" height="1.8" fill="#111"/><rect x="6" y="20" width="13" height="1.8" fill="#111"/>
</svg>
<div class="t" style="left:1639.5px;top:585.2px;font-size:13px;line-height:13px;font-weight:bold;color:#143f7c;letter-spacing:0.39px;-webkit-text-stroke:0.3px #143f7c;">Registri recenti</div>
<div class="abs" style="left:1592px;top:613px;width:317px;height:137px;border:1px solid #3e4859;border-radius:5px;background:linear-gradient(180deg,#f6f7f9 0,#eceef2 35%,#d6d8e3 75%,#c6c8d9 100%);box-shadow:inset 1px 1px 0 rgba(255,255,255,0.8)"></div>
<div class="abs" style="left:1647px;top:622px;width:253px;height:22px;background:#f3f4f7"></div>
<svg class="abs" style="left:1653px;top:626px" width="15" height="15" viewBox="0 0 15 15"><defs><radialGradient id="ig0" cx="0.4" cy="0.35" r="0.7"><stop offset="0" stop-color="#8cc4f4"/><stop offset="1" stop-color="#2a6fc8"/></radialGradient></defs><circle cx="7.5" cy="7.5" r="6.7" fill="url(#ig0)" stroke="#2b66b4" stroke-width="0.6"/><rect x="6.4" y="6" width="2.2" height="5.5" fill="#fff"/><circle cx="7.5" cy="4" r="1.2" fill="#fff"/></svg>
<div class="t" style="left:1682.3px;top:627.4px;font-size:11.5px;line-height:11.5px;font-weight:normal;color:#1a1a1a;letter-spacing:0.61px;">System successfully started Mysql...</div>
<div class="abs" style="left:1647px;top:646px;width:253px;height:22px;background:#e2e4ea"></div>
<svg class="abs" style="left:1653px;top:650px" width="15" height="15" viewBox="0 0 15 15"><defs><radialGradient id="ig1" cx="0.4" cy="0.35" r="0.7"><stop offset="0" stop-color="#8cc4f4"/><stop offset="1" stop-color="#2a6fc8"/></radialGradient></defs><circle cx="7.5" cy="7.5" r="6.7" fill="url(#ig1)" stroke="#2b66b4" stroke-width="0.6"/><rect x="6.4" y="6" width="2.2" height="5.5" fill="#fff"/><circle cx="7.5" cy="4" r="1.2" fill="#fff"/></svg>
<div class="t" style="left:1682.3px;top:651.4px;font-size:11.5px;line-height:11.5px;font-weight:normal;color:#1a1a1a;letter-spacing:0.63px;">System successfully started Web S...</div>
<div class="abs" style="left:1647px;top:670px;width:253px;height:22px;background:#f1f2f5"></div>
<svg class="abs" style="left:1653px;top:674px" width="15" height="15" viewBox="0 0 15 15"><defs><radialGradient id="ig2" cx="0.4" cy="0.35" r="0.7"><stop offset="0" stop-color="#8cc4f4"/><stop offset="1" stop-color="#2a6fc8"/></radialGradient></defs><circle cx="7.5" cy="7.5" r="6.7" fill="url(#ig2)" stroke="#2b66b4" stroke-width="0.6"/><rect x="6.4" y="6" width="2.2" height="5.5" fill="#fff"/><circle cx="7.5" cy="4" r="1.2" fill="#fff"/></svg>
<div class="t" style="left:1682.3px;top:675.4px;font-size:11.5px;line-height:11.5px;font-weight:normal;color:#1a1a1a;letter-spacing:0.63px;">System successfully started Web S...</div>
<div class="abs" style="left:1647px;top:694px;width:253px;height:22px;background:#dfe1e8"></div>
<svg class="abs" style="left:1653px;top:698px" width="15" height="15" viewBox="0 0 15 15"><defs><radialGradient id="ig3" cx="0.4" cy="0.35" r="0.7"><stop offset="0" stop-color="#8cc4f4"/><stop offset="1" stop-color="#2a6fc8"/></radialGradient></defs><circle cx="7.5" cy="7.5" r="6.7" fill="url(#ig3)" stroke="#2b66b4" stroke-width="0.6"/><rect x="6.4" y="6" width="2.2" height="5.5" fill="#fff"/><circle cx="7.5" cy="4" r="1.2" fill="#fff"/></svg>
<div class="t" style="left:1682.3px;top:699.4px;font-size:11.5px;line-height:11.5px;font-weight:normal;color:#1a1a1a;letter-spacing:0.62px;">Windows file service was started.</div>
<div class="abs" style="left:1647px;top:718px;width:253px;height:22px;background:#eceef2"></div>
<svg class="abs" style="left:1653px;top:722px" width="15" height="15" viewBox="0 0 15 15"><defs><radialGradient id="ig4" cx="0.4" cy="0.35" r="0.7"><stop offset="0" stop-color="#8cc4f4"/><stop offset="1" stop-color="#2a6fc8"/></radialGradient></defs><circle cx="7.5" cy="7.5" r="6.7" fill="url(#ig4)" stroke="#2b66b4" stroke-width="0.6"/><rect x="6.4" y="6" width="2.2" height="5.5" fill="#fff"/><circle cx="7.5" cy="4" r="1.2" fill="#fff"/></svg>
<div class="t" style="left:1682.3px;top:723.4px;font-size:11.5px;line-height:11.5px;font-weight:normal;color:#1a1a1a;letter-spacing:0.58px;">Windows file service was stopped.</div>
<svg class="abs" style="left:1614px;top:646px" width="14" height="9" viewBox="0 0 14 9"><path d="M1.5 7.5 L7 2.5 L12.5 7.5" fill="none" stroke="#a2a2a6" stroke-width="2.4"/></svg>
<svg class="abs" style="left:1614px;top:696px" width="14" height="9" viewBox="0 0 14 9"><path d="M1.5 1.5 L7 6.5 L12.5 1.5" fill="none" stroke="#2a2a2a" stroke-width="2.4"/></svg>
<div class="t" style="left:1612.5px;top:672.4px;font-size:11.5px;line-height:11.5px;font-weight:normal;color:#1a1a1a;letter-spacing:1.02px;">1/5</div>
<svg class="abs" style="left:1600px;top:761px" width="26" height="26" viewBox="0 0 26 26">
 <rect x="1.5" y="4.5" width="14" height="8" rx="4" transform="rotate(45 8.5 8.5)" fill="none" stroke="#222" stroke-width="2.3"/>
 <rect x="10.5" y="13.5" width="14" height="8" rx="4" transform="rotate(45 17.5 17.5)" fill="none" stroke="#111" stroke-width="2.3"/>
 <line x1="9.5" y1="9.5" x2="16.5" y2="16.5" stroke="#222" stroke-width="2"/>
</svg>
<div class="t" style="left:1639.3px;top:765.2px;font-size:13px;line-height:13px;font-weight:bold;color:#143f7c;letter-spacing:0.23px;-webkit-text-stroke:0.3px #143f7c;">Connessioni correnti</div>
<div class="abs" style="left:1592px;top:793px;width:317px;height:137px;border:1px solid #3e4859;border-radius:5px;background:linear-gradient(180deg,#f6f7f9 0,#eceef2 35%,#d6d8e3 75%,#c6c8d9 100%);box-shadow:inset 1px 1px 0 rgba(255,255,255,0.8)"></div>
<div class="abs" style="left:1647px;top:826px;width:253px;height:96px;background:#fff;box-shadow:inset -3px -3px 4px rgba(200,202,220,0.6)"></div>
<svg class="abs" style="left:1654px;top:805px" width="14" height="15" viewBox="0 0 14 15"><ellipse cx="7" cy="4.5" rx="3.2" ry="4" fill="#444"/><path d="M0.5 14.5 Q1 9.5 5 9 L9 9 Q13 9.5 13.5 14.5 Z" fill="#444"/></svg>
<div class="t" style="left:1671.3px;top:805.8px;font-size:11.5px;line-height:11.5px;font-weight:normal;color:#1a1a1a;letter-spacing:0.72px;">admin</div>
<div class="t" style="left:1718.2px;top:805.8px;font-size:11.5px;line-height:11.5px;font-weight:normal;color:#1a1a1a;letter-spacing:-0.42px;">HTTP</div>
<div class="t" style="left:1772.2px;top:805.8px;font-size:11.5px;line-height:11.5px;font-weight:normal;color:#1a1a1a;letter-spacing:1.00px;">00:24:24</div>
<svg class="abs" style="left:1874px;top:807px" width="18" height="12" viewBox="0 0 18 12"><path d="M2 10 L4 6 L7 3 L10 5.5 L8 8.5 Z" fill="#222"/><line x1="7" y1="3" x2="9.5" y2="0.5" stroke="#222" stroke-width="1"/><line x1="9.5" y1="5" x2="12" y2="2.5" stroke="#222" stroke-width="1"/><line x1="1" y1="11" x2="4" y2="8" stroke="#222" stroke-width="1.5"/><circle cx="14" cy="8" r="2.8" fill="none" stroke="#d04050" stroke-width="1.2"/><line x1="12.2" y1="6.2" x2="15.8" y2="9.8" stroke="#d04050" stroke-width="1.2"/></svg>
<svg class="abs" style="left:1614px;top:827px" width="14" height="9" viewBox="0 0 14 9"><path d="M1.5 7.5 L7 2.5 L12.5 7.5" fill="none" stroke="#a2a2a6" stroke-width="2.4"/></svg>
<svg class="abs" style="left:1614px;top:876px" width="14" height="9" viewBox="0 0 14 9"><path d="M1.5 1.5 L7 6.5 L12.5 1.5" fill="none" stroke="#a2a2a6" stroke-width="2.4"/></svg>
<div class="t" style="left:1612.5px;top:851.4px;font-size:11.5px;line-height:11.5px;font-weight:normal;color:#1a1a1a;letter-spacing:0.77px;">1/1</div>
<svg class="abs" style="left:1840px;top:936px" width="80" height="23" viewBox="0 0 80 23">
 <path d="M9 23 L31 2.5 L80 2.5 L80 23 Z" fill="#eef0f4" stroke="#b8bcc6" stroke-width="1"/>
 <path d="M46 10 L52 15.5 L58 10" fill="none" stroke="#222" stroke-width="2.6"/>
</svg>
<div class="abs" style="left:0;top:957px;width:1920px;height:2px;background:#8e96a3"></div>
<svg class="abs" style="left:1630px;top:888px" width="260" height="71" viewBox="0 0 260 71">
 <defs><linearGradient id="wmg" x1="0" y1="0" x2="0.8" y2="1"><stop offset="0" stop-color="#e8eefc"/><stop offset="0.45" stop-color="#a9bdf0"/><stop offset="1" stop-color="#8aa2e2"/></linearGradient></defs>
 <g transform="rotate(14 37 35)" opacity="0.6"><rect x="10" y="8" width="54" height="54" rx="6" fill="url(#wmg)"/>
 <path d="M24 21 L50 47 M48 24 L27 45" stroke="#f6f8ff" stroke-opacity="0.9" stroke-width="5.5" stroke-linecap="round"/></g>
 <text x="73" y="45.5" font-family="Liberation Sans" font-weight="normal" font-size="19" textLength="179" lengthAdjust="spacingAndGlyphs" fill="#6b84c0" fill-opacity="0.5" transform="translate(0,-11) scale(1,1.25)">xtremehardware.com</text>
</svg>
</body></html>
